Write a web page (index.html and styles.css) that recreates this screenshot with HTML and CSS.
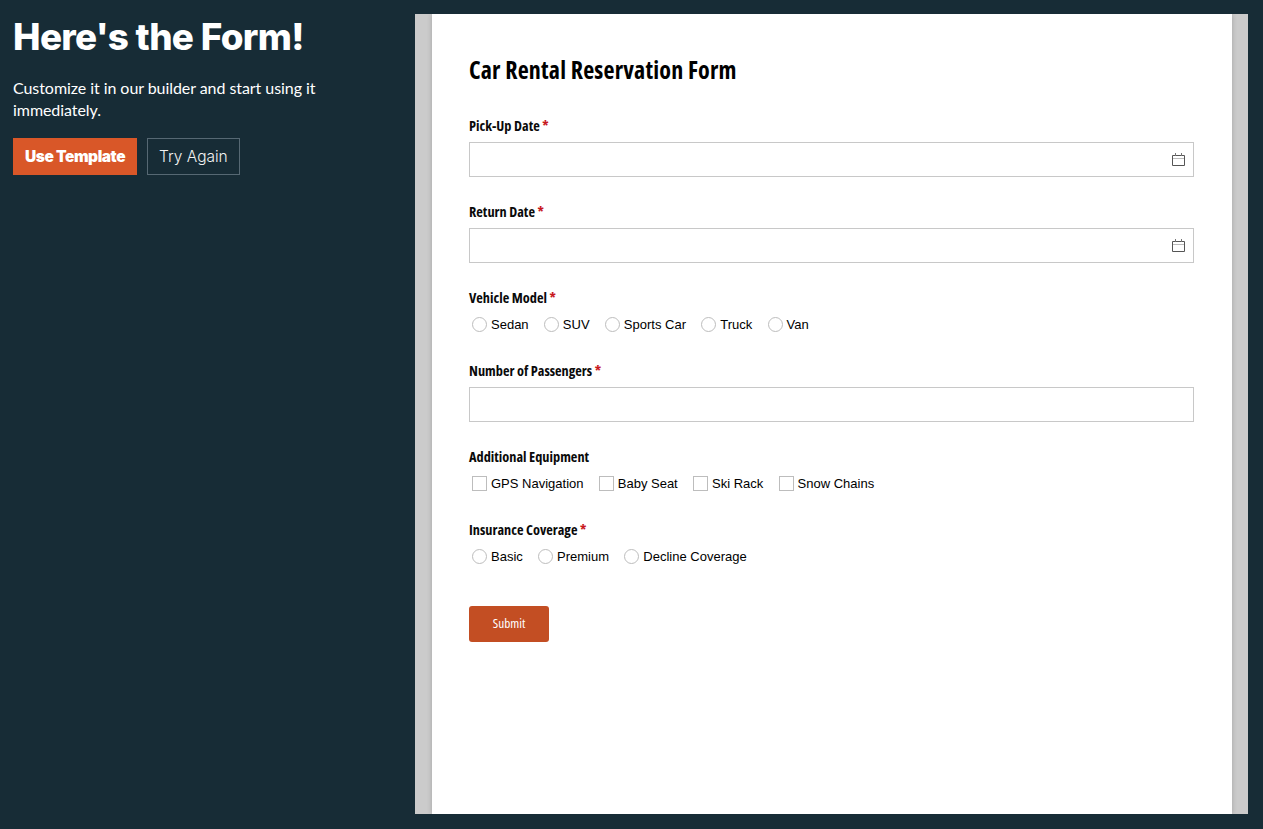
FILE: index.html
```html
<!DOCTYPE html>
<html lang="en">
<head>
<meta charset="utf-8">
<title>Car Rental Reservation Form</title>
<link rel="stylesheet" href="styles.css">
</head>
<body>
<div class="page">
  <aside class="intro">
    <h1>Here's the Form!</h1>
    <p>Customize it in our builder and start using it immediately.</p>
    <div class="actions">
      <a class="btn btn-primary">Use Template</a>
      <a class="btn btn-ghost">Try Again</a>
    </div>
  </aside>
  <main class="preview">
    <form class="sheet">
      <h2>Car Rental Reservation Form</h2>
      <div class="field">
        <div class="label">Pick-Up Date <span class="req">*</span></div>
        <div class="input"><svg class="cal" viewBox="0 0 13 13" width="13" height="13"><path d="M.5 2.5h12v10H.5z" fill="none" stroke="#555"/><path d="M1 5.5h11" stroke="#bbb"/><path d="M3.5 0v3M9.5 0v3" stroke="#777"/></svg></div>
      </div>
      <div class="field">
        <div class="label">Return Date <span class="req">*</span></div>
        <div class="input"><svg class="cal" viewBox="0 0 13 13" width="13" height="13"><path d="M.5 2.5h12v10H.5z" fill="none" stroke="#555"/><path d="M1 5.5h11" stroke="#bbb"/><path d="M3.5 0v3M9.5 0v3" stroke="#777"/></svg></div>
      </div>
      <div class="field choice">
        <div class="label">Vehicle Model <span class="req">*</span></div>
        <div class="options">
          <span class="opt"><i class="radio"></i>Sedan</span>
          <span class="opt"><i class="radio"></i>SUV</span>
          <span class="opt"><i class="radio"></i>Sports Car</span>
          <span class="opt"><i class="radio"></i>Truck</span>
          <span class="opt"><i class="radio"></i>Van</span>
        </div>
      </div>
      <div class="field">
        <div class="label">Number of Passengers <span class="req">*</span></div>
        <div class="input"></div>
      </div>
      <div class="field choice">
        <div class="label">Additional Equipment</div>
        <div class="options">
          <span class="opt"><i class="check"></i>GPS Navigation</span>
          <span class="opt"><i class="check"></i>Baby Seat</span>
          <span class="opt"><i class="check"></i>Ski Rack</span>
          <span class="opt"><i class="check"></i>Snow Chains</span>
        </div>
      </div>
      <div class="field choice">
        <div class="label">Insurance Coverage <span class="req">*</span></div>
        <div class="options">
          <span class="opt"><i class="radio"></i>Basic</span>
          <span class="opt"><i class="radio"></i>Premium</span>
          <span class="opt"><i class="radio"></i>Decline Coverage</span>
        </div>
      </div>
      <button type="button" class="submit">Submit</button>
    </form>
  </main>
</div>
</body>
</html>
```
FILE: styles.css
```css
* { box-sizing: border-box; }
html, body { margin: 0; height: 100%; }
body { background: #172c36; overflow: hidden; }
.page { display: flex; height: 829px; padding: 14px 15px 15px 13px; }
.intro { width: 402px; flex: none; color: #fff; }
h1 { margin: 0; font: 800 36.8px/46px Inter, "Noto Sans", sans-serif; letter-spacing: -0.65px; }
.intro p { margin: 17px 0 0; width: 340px; font: 400 16px/22px Lato, sans-serif; letter-spacing: -0.06px; }
.actions { display: flex; gap: 10px; margin-top: 17px; }
.btn { display: flex; align-items: center; height: 37px; font-family: Inter, sans-serif; font-size: 15.5px; }
.btn-primary { width: 124px; padding-left: 12px; background: #d95728; font-weight: 900; letter-spacing: -0.45px; }
.btn-ghost { width: 93px; padding-left: 11px; border: 1px solid #566873; font-weight: 300; color: #f2f2f2; }
.preview { width: 833px; height: 800px; background: #cbcbcb; padding: 0 16px 0 17px; flex: none; overflow: hidden; }
.sheet { height: 100%; background: #fff; padding: 40px 38px 0 37px; font-family: "Liberation Sans", Arial, sans-serif; box-shadow: 0 0 5px rgba(0, 0, 0, 0.2); }
h2 { margin: 0 0 32px; font: 700 24px/32px "Open Sans", sans-serif; font-stretch: 75%; letter-spacing: 0.2px; color: #000; }
.field { margin-bottom: 27px; }
.label { font: 700 14.3px/16px "Open Sans", sans-serif; font-stretch: 75%; color: #0a0a0a; margin-bottom: 8px; }
.req { color: #c8191e; }
.input { display: flex; align-items: center; justify-content: flex-end; height: 35px; border: 1px solid #c8c8c8; background: #fff; padding-right: 8px; }
.options { display: flex; gap: 15.25px; height: 22px; padding-bottom: 2px; padding-left: 3px; align-items: center; font-size: 13px; color: #000; }
.opt { display: flex; align-items: center; gap: 4px; }
.radio { width: 15px; height: 15px; border: 1px solid #bdbdbd; border-radius: 50%; }
.check { width: 15px; height: 15px; border: 1px solid #bdbdbd; }
.submit { display: block; margin-top: 38px; width: 80px; height: 36px; padding: 0 0 2px; border: 0; border-radius: 3px; background: #c34e23; color: #fff; font: 400 13.3px "Open Sans", sans-serif; font-stretch: 75%; }
```
